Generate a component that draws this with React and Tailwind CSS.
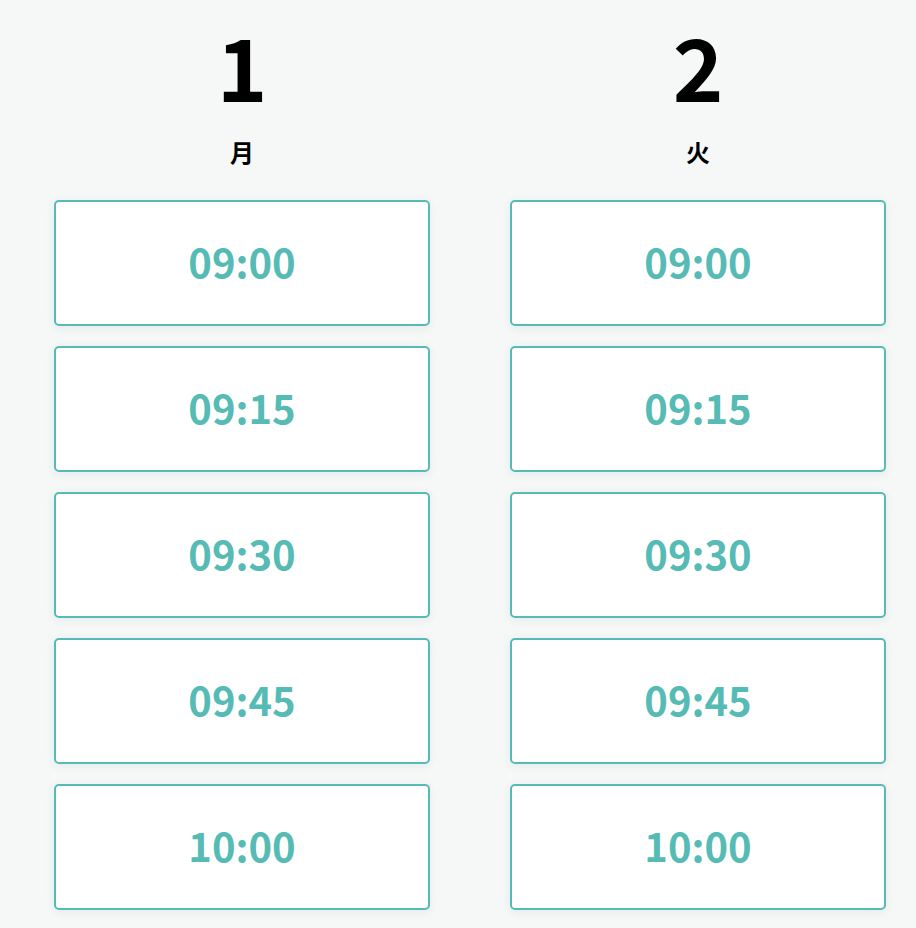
const days = [
  { date: '1', label: '月' },
  { date: '2', label: '火' },
]

const slots = ['09:00', '09:15', '09:30', '09:45', '10:00']

function DayColumn({ date, label }) {
  return (
    <div className="flex w-[376px] flex-col items-center">
      <div className="text-[86px] font-bold leading-none text-black">{date}</div>
      <div className="mt-[32px] text-[24px] font-bold leading-none text-black">{label}</div>
      <div className="mt-[36px] flex w-full flex-col gap-[20px]">
        {slots.map((t) => (
          <button
            key={t}
            className="flex h-[126px] w-full items-center justify-center rounded-[5px] border-2 border-[#55bbb4] bg-white pb-[4px] text-[40px] font-bold text-[#55bbb4] shadow-[0_2px_10px_rgba(0,60,60,0.08)]"
          >
            {t}
          </button>
        ))}
      </div>
    </div>
  )
}

export default function App() {
  return (
    <div
      className="min-h-screen bg-[#f6f8f8] pl-[54px] pt-[22px]"
      style={{ fontFamily: '"Noto Sans CJK JP", "Noto Sans", sans-serif' }}
    >
      <div className="flex gap-[80px]">
        {days.map((d) => (
          <DayColumn key={d.date} {...d} />
        ))}
      </div>
    </div>
  )
}
